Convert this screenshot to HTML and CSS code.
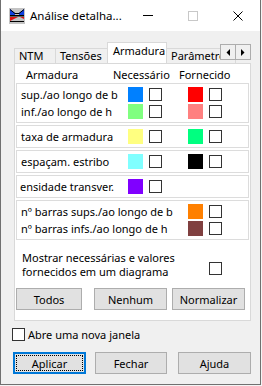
FILE: index.html
```html
<!DOCTYPE html>
<html lang="pt">
<head>
<meta charset="utf-8">
<link rel="stylesheet" href="styles.css">
</head>
<body>
<div class="window">
  <div class="titlebar">
    <svg class="appicon" width="16" height="16" viewBox="0 0 16 16">
      <rect x="0" y="0" width="16" height="16" fill="#c4c4c4"/>
      <polygon points="1,1 6,5 6,7 1,7" fill="#1040e0"/>
      <polygon points="15,1 10,5 10,7 15,7" fill="#1040e0"/>
      <polyline points="1,1.5 6,5.5 10,5.5 15,1.5" fill="none" stroke="#000" stroke-width="1"/>
      <rect x="1" y="7" width="14" height="1.5" fill="#000"/>
      <polygon points="1,9 9,9 1,13" fill="#e01010"/>
      <polygon points="11,9 15,9 15,11" fill="#e01010"/>
      <rect x="1" y="13" width="14" height="1" fill="#000"/>
    </svg>
    <span class="title">Análise detalha...</span>
    <span class="capbtn"><span class="cap-min"></span></span>
    <span class="capbtn"><span class="cap-max"></span></span>
    <span class="capbtn">
      <svg width="10" height="10" viewBox="0 0 10 10"><path d="M0.5 0.5 L9.5 9.5 M9.5 0.5 L0.5 9.5" stroke="#000" stroke-width="1"/></svg>
    </span>
  </div>

  <div class="main">
    <div class="tabs-area">
      <div class="tabstrip">
        <div class="tab t-ntm">NTM</div>
        <div class="tab t-ten">Tensões</div>
        <div class="tab t-arm sel">Armadura</div>
        <div class="tab t-par">Parâmetros</div>
        <div class="arrows">
          <span class="arrbtn"><svg width="4" height="7" viewBox="0 0 4 7"><polygon points="4,0 4,7 0.5,3.5" fill="#000"/></svg></span>
          <span class="arrbtn"><svg width="4" height="7" viewBox="0 0 4 7"><polygon points="0,0 0,7 3.5,3.5" fill="#000"/></svg></span>
        </div>
      </div>
      <div class="panel">
        <div class="colhead">
          <span class="ch1">Armadura</span>
          <span class="ch2">Necessário</span>
          <span class="ch3">Fornecido</span>
        </div>

        <div class="group">
          <div class="row">
            <span class="lbl">sup./ao longo de b</span>
            <span class="nec"><span class="sw c-blue"></span><span class="cb"></span></span>
            <span class="forn"><span class="sw c-red"></span><span class="cb"></span></span>
          </div>
          <div class="row">
            <span class="lbl">inf./ao longo de h</span>
            <span class="nec"><span class="sw c-green"></span><span class="cb"></span></span>
            <span class="forn"><span class="sw c-pink"></span><span class="cb"></span></span>
          </div>
        </div>

        <div class="group">
          <div class="row">
            <span class="lbl">taxa de armadura</span>
            <span class="nec"><span class="sw c-yellow"></span><span class="cb"></span></span>
            <span class="forn"><span class="sw c-mint"></span><span class="cb"></span></span>
          </div>
        </div>

        <div class="group">
          <div class="row">
            <span class="lbl">espaçam. estribo</span>
            <span class="nec"><span class="sw c-cyan"></span><span class="cb"></span></span>
            <span class="forn"><span class="sw c-black"></span><span class="cb"></span></span>
          </div>
        </div>

        <div class="group">
          <div class="row">
            <span class="lbl clip">ensidade transver.</span>
            <span class="nec"><span class="sw c-purple"></span><span class="cb"></span></span>
          </div>
        </div>

        <div class="group">
          <div class="row">
            <span class="lbl">nº barras sups./ao longo de b</span>
            <span class="nec"></span>
            <span class="forn"><span class="sw c-orange"></span><span class="cb"></span></span>
          </div>
          <div class="row">
            <span class="lbl">nº barras infs./ao longo de h</span>
            <span class="nec"></span>
            <span class="forn"><span class="sw c-brown"></span><span class="cb"></span></span>
          </div>
        </div>

        <div class="diag">
          <span class="diagtext">Mostrar necessárias e valores<br>fornecidos em um diagrama</span>
          <span class="cb diagcb"></span>
        </div>

        <div class="btnrow">
          <span class="btn b-todos">Todos</span>
          <span class="btn b-nenhum">Nenhum</span>
          <span class="btn b-norm">Normalizar</span>
        </div>
      </div>
    </div>

    <div class="newwin">
      <span class="cb"></span>
      <span class="nwtext">Abre uma nova janela</span>
    </div>

    <div class="footer">
      <span class="btn b-apl">Aplicar</span>
      <span class="btn b-fech">Fechar</span>
      <span class="btn b-ajuda">Ajuda</span>
    </div>
  </div>
</div>
</body>
</html>
```

FILE: styles.css
```css
* { box-sizing: border-box; }
html, body { margin: 0; padding: 0; }
body {
  background: #f4f4f4;
  width: 262px;
  height: 386px;
  overflow: hidden;
  font-family: "Noto Sans", sans-serif;
  font-size: 11px;
  color: #000;
}
.window {
  width: 261px;
  height: 385px;
  border: 1px solid #707070;
  border-top: none;
  background: #f0f0f0;
  display: flex;
  flex-direction: column;
}
.titlebar {
  height: 31px;
  background: #fff;
  display: flex;
  align-items: center;
  flex-shrink: 0;
}
.appicon { margin-left: 8px; flex-shrink: 0; }
.title {
  margin-left: 5px;
  flex: 1;
  font-size: 11.5px;
  white-space: nowrap;
}
.capbtn {
  width: 45px;
  height: 31px;
  display: flex;
  align-items: center;
  justify-content: center;
  flex-shrink: 0;
}
.cap-min { width: 10px; height: 1px; background: #000; }
.cap-max { width: 10px; height: 10px; border: 1px solid #c8c8c8; }

.main { padding: 11px 0 0 11px; }
.tabs-area { margin-left: 2px; width: 237px; }
.tabstrip {
  position: relative;
  display: flex;
  align-items: flex-end;
  height: 21px;
  overflow: hidden;
}
.tab {
  height: 15px;
  border: 1px solid #d9d9d9;
  border-bottom: none;
  background: #f0f0f0;
  padding-left: 4px;
  line-height: 13px;
  white-space: nowrap;
  flex-shrink: 0;
  margin-right: -1px;
}
.t-ntm { width: 42px; }
.t-ten { width: 53px; }
.t-arm { width: 60px; }
.t-par { width: 70px; }
.tab.sel {
  position: relative;
  z-index: 1;
  height: 22px;
  margin-bottom: -1px;
  background: #fff;
  padding-left: 5px;
  line-height: 16px;
}
.arrows {
  position: absolute;
  right: 0;
  top: 2px;
  display: flex;
  z-index: 2;
}
.arrbtn {
  width: 16px;
  height: 16px;
  border: 1px solid #adadad;
  background: #f0f0f0;
  display: flex;
  align-items: center;
  justify-content: center;
  margin-left: -1px;
}
.panel {
  height: 258px;
  border: 1px solid #d9d9d9;
  background: #fff;
}
.colhead {
  height: 19px;
  display: flex;
  align-items: center;
  padding-left: 11px;
  padding-top: 1px;
}
.ch1 { width: 87px; }
.ch2 { width: 66px; }

.group {
  margin: 0 1px 2px 1px;
  border: 1px solid #dcdcdc;
  padding: 3px 0 3px 4px;
  display: flex;
  flex-direction: column;
  gap: 2px;
}
.row {
  height: 15px;
  display: flex;
  align-items: center;
}
.lbl { width: 107px; white-space: nowrap; flex-shrink: 0; }
.lbl.clip { margin-left: -1px; width: 108px; }
.nec { width: 60px; display: flex; gap: 6px; flex-shrink: 0; }
.forn { display: flex; gap: 6px; }
.sw { width: 15px; height: 15px; flex-shrink: 0; }
.cb {
  width: 13px;
  height: 13px;
  border: 1px solid #333;
  background: #fff;
  flex-shrink: 0;
  align-self: center;
}
.c-blue { background: #0080ff; }
.c-red { background: #ff0000; }
.c-green { background: #80ff80; }
.c-pink { background: #ff8080; }
.c-yellow { background: #ffff80; }
.c-mint { background: #00ff80; }
.c-cyan { background: #80ffff; }
.c-black { background: #000; }
.c-purple { background: #8000ff; }
.c-orange { background: #ff8000; }
.c-brown { background: #804040; }

.diag {
  margin-top: 11px;
  padding-left: 7px;
  display: flex;
  align-items: flex-start;
}
.diagtext { width: 187px; line-height: 14px; }
.diagcb { margin-top: 6px; }

.btnrow { display: flex; margin-top: 9px; }
.btn {
  height: 22px;
  background: #e1e1e1;
  border: 1px solid #adadad;
  display: flex;
  align-items: center;
  justify-content: center;
  flex-shrink: 0;
}
.b-todos { margin-left: 1px; width: 66px; }
.b-nenhum { margin-left: 12px; width: 73px; }
.b-norm { margin-left: 5px; width: 73px; }

.newwin {
  margin-top: 7px;
  display: flex;
  align-items: center;
  gap: 3px;
  height: 13px;
}
.footer { display: flex; margin-top: 11px; }
.b-apl {
  margin-left: 1px;
  width: 73px;
  border: 2px solid #0078d7;
  outline: 1px dotted #000;
  outline-offset: -4px;
}
.b-fech { margin-left: 9px; width: 72px; }
.b-ajuda { margin-left: 11px; width: 73px; }
```
